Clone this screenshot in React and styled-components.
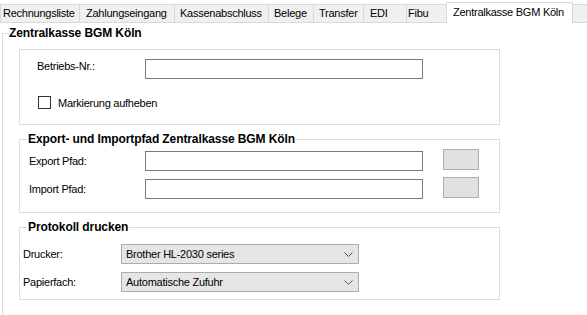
import styled, { createGlobalStyle } from "styled-components";

const GlobalStyle = createGlobalStyle`
  html, body {
    margin: 0;
    padding: 0;
    background: #ffffff;
    overflow: hidden;
  }
  body {
    font-family: "Liberation Sans", Arial, sans-serif;
    font-size: 11px;
    letter-spacing: -0.25px;
    color: #000000;
  }
`;

const Page = styled.div`
  width: 587px;
  height: 315px;
  overflow: hidden;
`;

const TabStrip = styled.div`
  display: flex;
  align-items: flex-end;
  height: 23px;
  box-sizing: border-box;
  border-bottom: 1px solid #d9d9d9;
`;

const Tab = styled.div`
  flex: none;
  box-sizing: border-box;
  width: ${(p) => p.$w}px;
  height: ${(p) => (p.$active ? 21 : 18)}px;
  margin-bottom: ${(p) => (p.$active ? -1 : 0)}px;
  padding-left: ${(p) => p.$pad ?? 6}px;
  padding-top: ${(p) => (p.$active ? 3 : 2)}px;
  line-height: 13px;
  white-space: nowrap;
  overflow: hidden;
  background: ${(p) => (p.$active ? "#ffffff" : "#f0f0f0")};
  border-top: 1px solid #d9d9d9;
  border-left: 1px solid #d9d9d9;
  border-right: ${(p) => (p.$active ? "1px solid #d9d9d9" : "none")};
`;

const Filler = styled.div`
  flex: 1;
  height: 18px;
  background: #f0f0f0;
  border-top: 1px solid #d9d9d9;
  box-sizing: border-box;
`;

const Outer = styled.div`
  margin-left: 2px;
`;

const OuterHeader = styled.div`
  display: flex;
  height: 14px;
  margin-top: 3px;

  &::before {
    content: "";
    width: 6px;
    margin-top: 7px;
    border-top: 1px solid #dcdcdc;
    border-left: 1px solid #dcdcdc;
  }
`;

const Title = styled.span`
  font-size: 12px;
  font-weight: bold;
  line-height: 14px;
  letter-spacing: -0.1px;
`;

const OuterBody = styled.div`
  border-left: 1px solid #dcdcdc;
  padding: 9px 0 40px 16px;
  display: flex;
  flex-direction: column;
`;

const Box = styled.div`
  width: 481px;
  box-sizing: border-box;
  border: 1px solid #dcdcdc;
  padding: 9px 0 15px 17px;
`;

const Group = styled.fieldset`
  width: 481px;
  box-sizing: border-box;
  margin: ${(p) => p.$mt}px 0 0 0;
  border: 1px solid #dcdcdc;
  padding: 0;
  min-width: 0;
`;

const Legend = styled.legend`
  margin-left: 7px;
  padding: 0 1px;
  font-size: 12px;
  font-weight: bold;
  line-height: 15px;
  letter-spacing: -0.1px;
`;

const GroupBody = styled.div`
  padding: ${(p) => p.$pad};
  display: flex;
  flex-direction: column;
  gap: ${(p) => p.$gap}px;
`;

const FieldRow = styled.div`
  display: grid;
  grid-template-columns: ${(p) => p.$cols};
  align-items: ${(p) => p.$align || "start"};
  height: ${(p) => p.$h}px;
`;

const Label = styled.span`
  line-height: 14px;
  margin-top: ${(p) => p.$mt || 0}px;
  white-space: nowrap;
`;

const TextBox = styled.div`
  box-sizing: border-box;
  width: 278px;
  height: 20px;
  margin-top: ${(p) => p.$mt || 0}px;
  border: 1px solid #7a7a7a;
  background: #ffffff;
`;

const BrowseButton = styled.div`
  box-sizing: border-box;
  width: 36px;
  height: 21px;
  margin-left: 20px;
  background: #e1e1e1;
  border: 1px solid #adadad;
`;

const CheckRow = styled.label`
  display: flex;
  align-items: center;
  gap: 7px;
  margin: 17px 0 0 1px;
  height: 13px;
`;

const CheckBox = styled.span`
  width: 13px;
  height: 13px;
  box-sizing: border-box;
  border: 1px solid #333333;
  background: #ffffff;
`;

const Combo = styled.div`
  box-sizing: border-box;
  width: 238px;
  height: 20px;
  display: flex;
  align-items: center;
  justify-content: space-between;
  padding: 0 5px 0 4px;
  background: #e5e5e5;
  border: 1px solid #acacac;
`;

const Chevron = () => (
  <svg width="9" height="5" viewBox="0 0 9 5">
    <polyline points="0.5,0.5 4.5,4.5 8.5,0.5" fill="none" stroke="#555" strokeWidth="1" />
  </svg>
);

const tabs = [
  { label: "Rechnungsliste", w: 79, pad: 2 },
  { label: "Zahlungseingang", w: 95 },
  { label: "Kassenabschluss", w: 94, pad: 5 },
  { label: "Belege", w: 45, pad: 5 },
  { label: "Transfer", w: 50, pad: 5 },
  { label: "EDI", w: 43 },
  { label: "Fibu", w: 40, pad: 1 },
];

export default function App() {
  return (
    <Page>
      <GlobalStyle />
      <TabStrip>
        {tabs.map((t) => (
          <Tab key={t.label} $w={t.w} $pad={t.pad}>
            {t.label}
          </Tab>
        ))}
        <Tab $active $w={127}>
          Zentralkasse BGM Köln
        </Tab>
        <Filler />
      </TabStrip>

      <Outer>
        <OuterHeader>
          <Title>Zentralkasse BGM Köln</Title>
        </OuterHeader>
        <OuterBody>
          <Box>
            <FieldRow $cols="108px 278px" $h={20}>
              <Label>Betriebs-Nr.:</Label>
              <TextBox />
            </FieldRow>
            <CheckRow>
              <CheckBox />
              <span>Markierung aufheben</span>
            </CheckRow>
          </Box>

          <Group $mt={7}>
            <Legend>Export- und Importpfad Zentralkasse BGM Köln</Legend>
            <GroupBody $pad="2px 0 13px 9px" $gap={6}>
              <FieldRow $cols="116px 278px 56px" $h={22}>
                <Label $mt={5}>Export Pfad:</Label>
                <TextBox $mt={2} />
                <BrowseButton />
              </FieldRow>
              <FieldRow $cols="116px 278px 56px" $h={22}>
                <Label $mt={5}>Import Pfad:</Label>
                <TextBox $mt={2} />
                <BrowseButton />
              </FieldRow>
            </GroupBody>
          </Group>

          <Group $mt={7}>
            <Legend>Protokoll drucken</Legend>
            <GroupBody $pad="9px 0 7px 3px" $gap={8}>
              <FieldRow $cols="98px 238px" $h={20} $align="center">
                <Label>Drucker:</Label>
                <Combo>
                  <span>Brother HL-2030 series</span>
                  <Chevron />
                </Combo>
              </FieldRow>
              <FieldRow $cols="98px 238px" $h={20} $align="center">
                <Label>Papierfach:</Label>
                <Combo>
                  <span>Automatische Zufuhr</span>
                  <Chevron />
                </Combo>
              </FieldRow>
            </GroupBody>
          </Group>
        </OuterBody>
      </Outer>
    </Page>
  );
}
